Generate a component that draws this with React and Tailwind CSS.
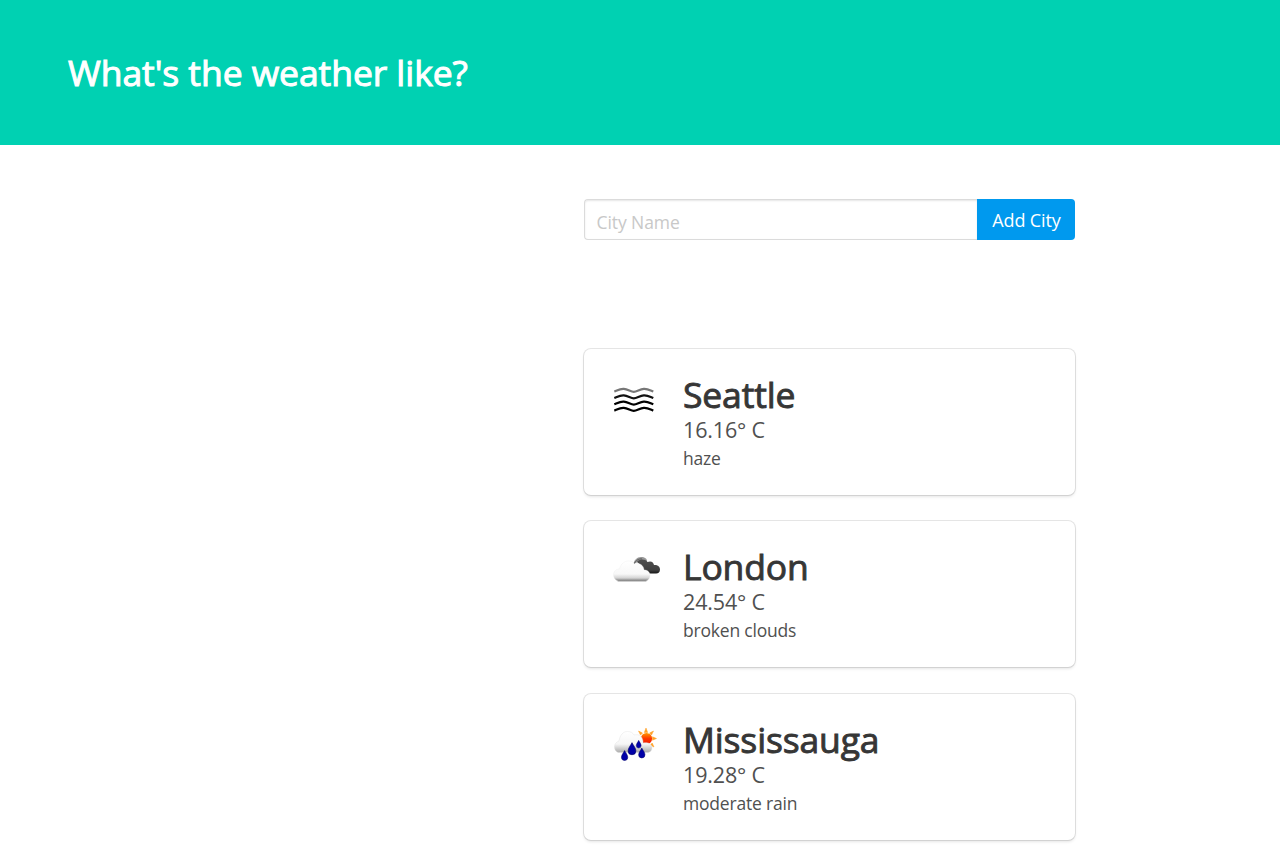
import React from 'react';

function HazeIcon() {
  const wave = 'c3-1.200 6-3 9.500-2.700 4 .3 7 3 10 3s6-2.700 10-3c3.500-.3 6.500 1.500 9.500 2.700';
  return (
    <svg className="block h-[50px] w-[54px]" viewBox="0 0 54 50" fill="none" strokeWidth="2.300" aria-hidden="true">
      <path d={'M4.300 18.500' + wave} stroke="#777" />
      <path d={'M4.300 25' + wave} stroke="#111" />
      <path d={'M4.300 31.300' + wave} stroke="#000" />
      <path d={'M4.300 37.600' + wave} stroke="#000" />
    </svg>
  );
}

function CloudsIcon() {
  return (
    <svg className="block h-[50px] w-[54px]" viewBox="0 0 54 50" aria-hidden="true">
      <defs>
        <linearGradient id="lightCloud" x1="0" y1="0" x2="0" y2="1">
          <stop offset="0" stopColor="#fff" />
          <stop offset=".65" stopColor="#f8f8f8" />
          <stop offset=".85" stopColor="#d4d4d4" />
          <stop offset="1" stopColor="#777" />
        </linearGradient>
        <linearGradient id="darkCloud" x1="0" y1="0" x2="0" y2="1">
          <stop offset="0" stopColor="#505050" />
          <stop offset=".75" stopColor="#404040" />
          <stop offset="1" stopColor="#151515" />
        </linearGradient>
      </defs>
      <g transform="translate(0 -2)">
        <path d="M23 22c1-5 4-8 8-8 4 0 6 2 6 4-5-1-10 0-14 4z" fill="#999" />
        <path d="M24 21c2-4 5-5.500 8-5" fill="none" stroke="#555" strokeWidth="1" />
        <path d="M27 19c1-2.500 8-4 10.500 0 4-1.500 6 .5 6.500 3 4-.5 6 2 6 4.500 0 2.500-1.500 4-4 4H36c-2-4-4-7-9-11.500z" fill="url(#darkCloud)" />
        <path d="M9 38c-3 0-5.500-3-5.500-6 0-4 3-6 6-6 1-5 5-8 9-8 3 0 5 1 6 3 5-1.500 9 1 9.500 6 3.500 0 6 2 6 5.500s-2.500 5.500-5 5.500z" fill="url(#lightCloud)" stroke="#eee" strokeWidth=".4" />
        <path d="M8 37.900h28" stroke="#888" strokeWidth="1" strokeLinecap="round" />
      </g>
    </svg>
  );
}

function Drop({ x, y, s }) {
  return (
    <g transform={`translate(${x} ${y}) scale(${s})`}>
      <path d="M0-5.500C1.500-2.500 3.500-.5 3.500 2a3.500 3.500 0 0 1-7 0C-3.500-.5-1.500-2.500 0-5.500z" fill="#0000a8" stroke="#000068" strokeWidth=".6" />
    </g>
  );
}

function RainIcon() {
  return (
    <svg className="block h-[50px] w-[54px]" viewBox="0 0 54 50" aria-hidden="true">
      <defs>
        <linearGradient id="sun" x1="0" y1="0" x2="0" y2="1">
          <stop offset="0" stopColor="#ff9a00" />
          <stop offset=".5" stopColor="#ff3800" />
          <stop offset="1" stopColor="#f01800" />
        </linearGradient>
        <linearGradient id="rainCloud" x1="0" y1="0" x2="0" y2="1">
          <stop offset="0" stopColor="#fff" />
          <stop offset=".6" stopColor="#f6f6f6" />
          <stop offset="1" stopColor="#aaa" />
        </linearGradient>
      </defs>
      <path d="M36 10l1.700 4.500h-3.400zM43.500 13l-2 4-2-2zM46.500 20.500l-4 1.700v-3.400zM44 29l-3.800-2 2-2zM28.500 13l4 2-2 2z" fill="#ffa126" stroke="#ffa126" strokeWidth=".5" />
      <circle cx="36.500" cy="20.500" r="5.600" fill="url(#sun)" />
      <path d="M9 34.500c-2.500 0-4.500-2.500-4.500-5.500 0-3.500 2.500-5.500 4.500-6 1-6 4-9.500 8.500-9.500 3.500 0 5.500 1.500 6.500 3.500 4-1 7 .5 8 3 1 2 1 3.500 1 5 3.500-1 9 0 9 4.500 0 3-2 5-5 5z" fill="url(#rainCloud)" stroke="#ddd" strokeWidth=".4" />
      <Drop x={14.600} y={37.500} s={0.900} />
      <Drop x={22} y={30.700} s={1.100} />
      <Drop x={28.700} y={26.200} s={0.700} />
      <Drop x={31.800} y={35} s={0.900} />
    </svg>
  );
}

const cities = [
  { name: 'Seattle', temp: '16.16° C', text: 'haze', Icon: HazeIcon },
  { name: 'London', temp: '24.54° C', text: 'broken clouds', Icon: CloudsIcon },
  { name: 'Mississauga', temp: '19.28° C', text: 'moderate rain', Icon: RainIcon },
];

function CityCard({ city }) {
  const { name, temp, text, Icon } = city;
  return (
    <article className="flex h-[146px] shrink-0 rounded-[7px] bg-white pl-[26px] pt-[24px] shadow-[0_2px_3px_rgba(10,10,10,0.1),0_0_0_1px_rgba(10,10,10,0.1)]">
      <div className="w-[73px] shrink-0">
        <Icon />
      </div>
      <div className="whitespace-nowrap pt-[1px] text-[#505050]">
        <h2 className="text-[35.500px] font-normal leading-[41px] tracking-[-0.150px] text-[#363636] [-webkit-text-stroke:0.9px_#363636]">{name}</h2>
        <p className="text-[21.500px] leading-[29px] tracking-[-0.150px]">{temp}</p>
        <p className="text-[17.500px] leading-[29px] tracking-[-0.200px]">{text}</p>
      </div>
    </article>
  );
}

export default function App() {
  return (
    <div className="h-[853px] overflow-hidden bg-white font-['Open_Sans','Noto_Sans',sans-serif]">
      <header className="flex h-[145px] items-center bg-[#00d1b2] pb-[2px] pl-[68px]">
        <h1 className="whitespace-nowrap text-[35.500px] font-normal leading-[42px] tracking-[-0.070px] text-white [-webkit-text-stroke:1px_white]">What's the weather like?</h1>
      </header>
      <main className="ml-[584px] w-[491px] pt-[54.400px]">
        <form className="flex h-[41px]" onSubmit={(e) => e.preventDefault()}>
          <input
            type="text"
            placeholder="City Name"
            className="min-w-0 flex-1 rounded-l-[4px] border border-r-0 border-[#dbdbdb] bg-white px-[11.500px] pt-[4px] text-[17.500px] tracking-[-0.080px] text-[#363636] shadow-[inset_0_1px_2px_rgba(10,10,10,0.1)] outline-none placeholder:text-[#c8c8c8]"
          />
          <button type="submit" className="w-[98px] whitespace-nowrap rounded-r-[4px] bg-[#0099ee] pl-[1px] pt-[1px] text-[18px] tracking-[-0.100px] text-white">
            Add City
          </button>
        </form>
        <section className="mt-[108.600px] flex flex-col gap-[26.400px]">
          {cities.map((city) => (
            <CityCard key={city.name} city={city} />
          ))}
        </section>
      </main>
    </div>
  );
}
